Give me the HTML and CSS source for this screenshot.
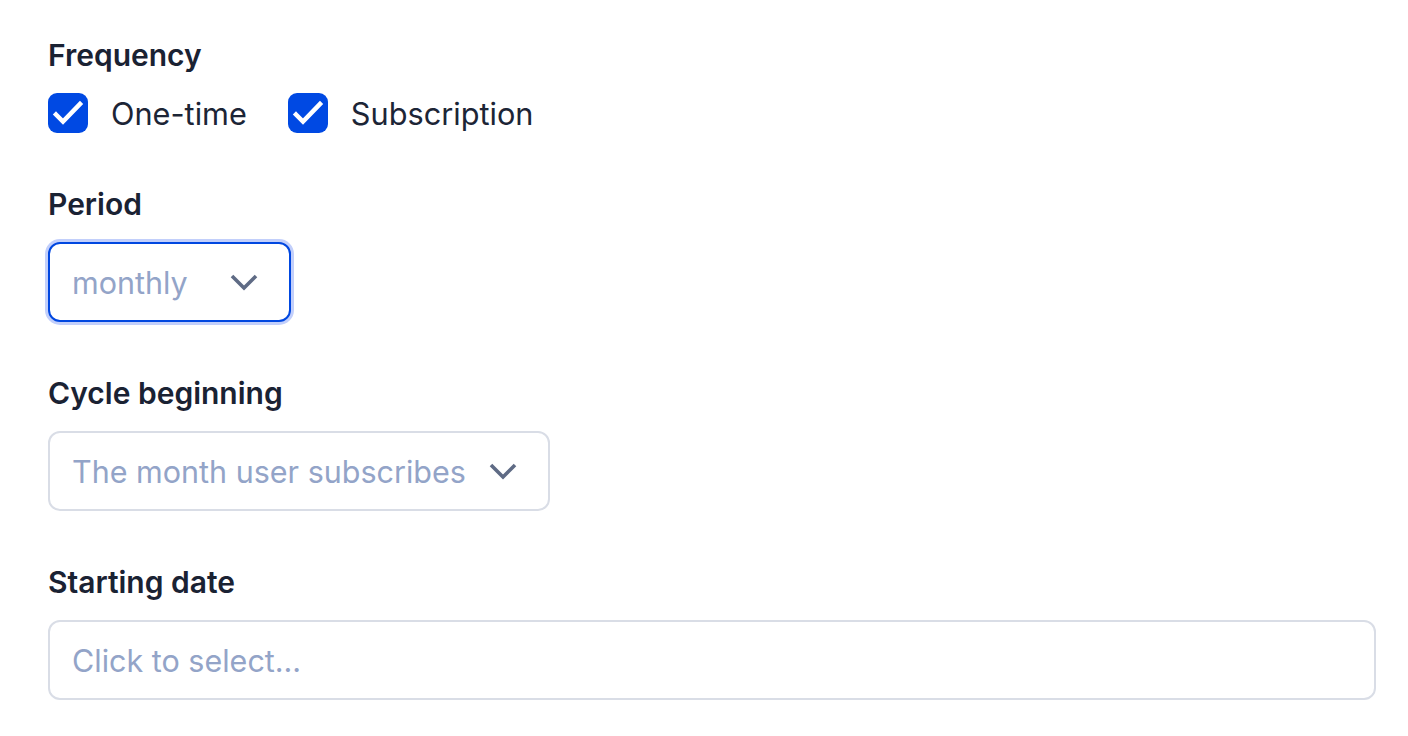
FILE: index.html
```html
<!DOCTYPE html>
<html lang="en">
<head>
<meta charset="utf-8">
<title>Form</title>
<link rel="stylesheet" href="styles.css">
</head>
<body>
<form class="form">
  <div class="field">
    <div class="label">Frequency</div>
    <div class="checks">
      <label class="check">
        <span class="box"><svg width="40" height="40" viewBox="0 0 40 40"><path d="M8 21.5 L15 28.5 L32 11" fill="none" stroke="#fff" stroke-width="4.5" stroke-linecap="square"/></svg></span>
        <span class="check-text">One-time</span>
      </label>
      <label class="check">
        <span class="box"><svg width="40" height="40" viewBox="0 0 40 40"><path d="M8 21.5 L15 28.5 L32 11" fill="none" stroke="#fff" stroke-width="4.5" stroke-linecap="square"/></svg></span>
        <span class="check-text">Subscription</span>
      </label>
    </div>
  </div>
  <div class="field">
    <div class="label">Period</div>
    <div class="select select-period focused">
      <span class="placeholder">monthly</span>
      <svg class="chev" width="30" height="18" viewBox="0 0 30 18"><path d="M3 3 L15 15 L27 3" fill="none" stroke="#5f6b85" stroke-width="3.6"/></svg>
    </div>
  </div>
  <div class="field">
    <div class="label">Cycle beginning</div>
    <div class="select select-cycle">
      <span class="placeholder">The month user subscribes</span>
      <svg class="chev" width="30" height="18" viewBox="0 0 30 18"><path d="M3 3 L15 15 L27 3" fill="none" stroke="#5f6b85" stroke-width="3.6"/></svg>
    </div>
  </div>
  <div class="field">
    <div class="label">Starting date</div>
    <div class="input">
      <span class="placeholder">Click to select...</span>
    </div>
  </div>
</form>
</body>
</html>
```

FILE: styles.css
```css
html, body {
  margin: 0;
  padding: 0;
  background: #ffffff;
}
body {
  font-family: Inter, "Noto Sans", "Liberation Sans", sans-serif;
  color: #1a2233;
}
.form {
  padding: 35px 32px 0 48px;
  display: flex;
  flex-direction: column;
  gap: 51px;
}
.field {
  display: flex;
  flex-direction: column;
  align-items: flex-start;
  gap: 18px;
}
.label {
  font-size: 30px;
  line-height: 40px;
  font-weight: 600;
  color: #1a2233;
}
.checks {
  display: flex;
  gap: 41px;
  align-items: center;
  height: 40px;
}
.check {
  display: flex;
  align-items: center;
  gap: 23px;
}
.box {
  width: 40px;
  height: 40px;
  border-radius: 9px;
  background: #0049e3;
  display: block;
}
.box svg {
  display: block;
}
.check-text {
  font-size: 30.7px;
  line-height: 40px;
  padding-top: 2px;
  color: #1c2536;
}
.select, .input {
  box-sizing: border-box;
  height: 80px;
  border: 2px solid #d9dde6;
  border-radius: 12px;
  display: flex;
  align-items: center;
  padding: 0 30px 0 22px;
  background: #fff;
}
.select {
  justify-content: space-between;
}
.select-period {
  width: 243px;
}
.select-cycle {
  width: 502px;
}
.focused {
  border-color: #0047e0;
  box-shadow: 0 0 0 3px #c2cffb;
}
.input {
  align-self: stretch;
}
.placeholder {
  font-size: 30.5px;
  line-height: 40px;
  padding-top: 2px;
  color: #93a4c8;
}
.chev {
  display: block;
}
```
